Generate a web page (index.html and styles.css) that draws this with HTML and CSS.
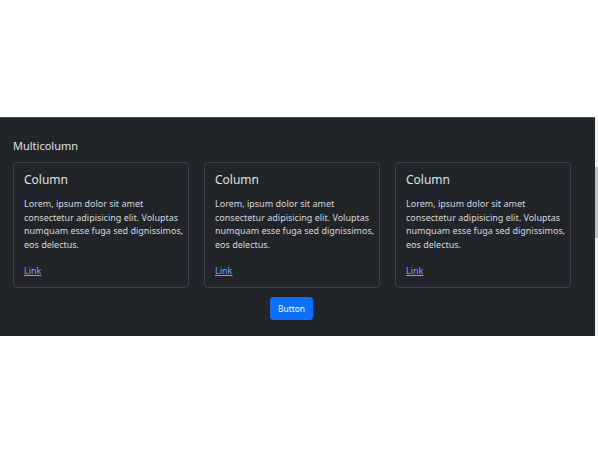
FILE: index.html
```html
<!DOCTYPE html>
<html>
<head>
<meta charset="utf-8">
<link rel="stylesheet" href="styles.css">
</head>
<body>
<div class="frame">
  <section class="multi">
    <h2 class="title">Multicolumn</h2>
    <div class="cols">
      <div class="card">
        <h3 class="card-title">Column</h3>
        <p class="card-text">Lorem, ipsum dolor sit amet consectetur adipisicing elit. Voluptas numquam esse fuga sed dignissimos, eos delectus.</p>
        <a class="card-link" href="#">Link</a>
      </div>
      <div class="card">
        <h3 class="card-title">Column</h3>
        <p class="card-text">Lorem, ipsum dolor sit amet consectetur adipisicing elit. Voluptas numquam esse fuga sed dignissimos, eos delectus.</p>
        <a class="card-link" href="#">Link</a>
      </div>
      <div class="card">
        <h3 class="card-title">Column</h3>
        <p class="card-text">Lorem, ipsum dolor sit amet consectetur adipisicing elit. Voluptas numquam esse fuga sed dignissimos, eos delectus.</p>
        <a class="card-link" href="#">Link</a>
      </div>
    </div>
    <div class="actions">
      <button class="btn">Button</button>
    </div>
  </section>
  <div class="scrollbar"><div class="thumb"></div></div>
</div>
</body>
</html>
```
FILE: styles.css
```css
html, body {
  margin: 0;
  padding: 0;
  background: #ffffff;
}
body {
  font-family: "Noto Sans", "Open Sans", sans-serif;
  width: 598px;
  height: 454px;
  overflow: hidden;
}
.frame {
  display: flex;
  margin-top: 117px;
}
.multi {
  flex: 0 0 595px;
  box-sizing: border-box;
  background: #212529;
  border-top: 1px solid #4a4f55;
  padding: 21px 0 16px 13px;
  color: #dee2e6;
}
.title {
  margin: 0 0 10px 0;
  font-size: 11px;
  line-height: 13px;
  font-weight: 400;
  color: #dee2e6;
}
.cols {
  display: grid;
  grid-template-columns: 176px 176px 176px;
  column-gap: 15px;
}
.card {
  box-sizing: border-box;
  border: 1px solid #3d4147;
  border-radius: 4px;
  padding: 10px 4px 9px 10px;
}
.card-title {
  margin: 0 0 10px 0;
  font-size: 12px;
  line-height: 14px;
  font-weight: 400;
  color: #dee2e6;
}
.card-text {
  margin: 0 0 13px 0;
  font-size: 9px;
  line-height: 13.6px;
  color: #d4d8dc;
}
.card-link {
  display: block;
  font-size: 9px;
  line-height: 13.5px;
  color: #6ea8fe;
  text-decoration: underline;
}
.actions {
  display: flex;
  justify-content: center;
  width: 557px;
  margin-top: 9px;
}
.btn {
  height: 23px;
  padding: 0 7px;
  border: 1px solid #0d6efd;
  border-radius: 3px;
  background: #0d6efd;
  color: #ffffff;
  font-family: "Noto Sans", "Open Sans", sans-serif;
  font-size: 8.4px;
  cursor: pointer;
}
.scrollbar {
  flex: 0 0 3px;
  background: #f1f1f1;
  display: flex;
  flex-direction: column;
  padding-top: 50px;
  box-sizing: border-box;
}
.thumb {
  height: 71px;
  background: #c1c1c1;
}
```
